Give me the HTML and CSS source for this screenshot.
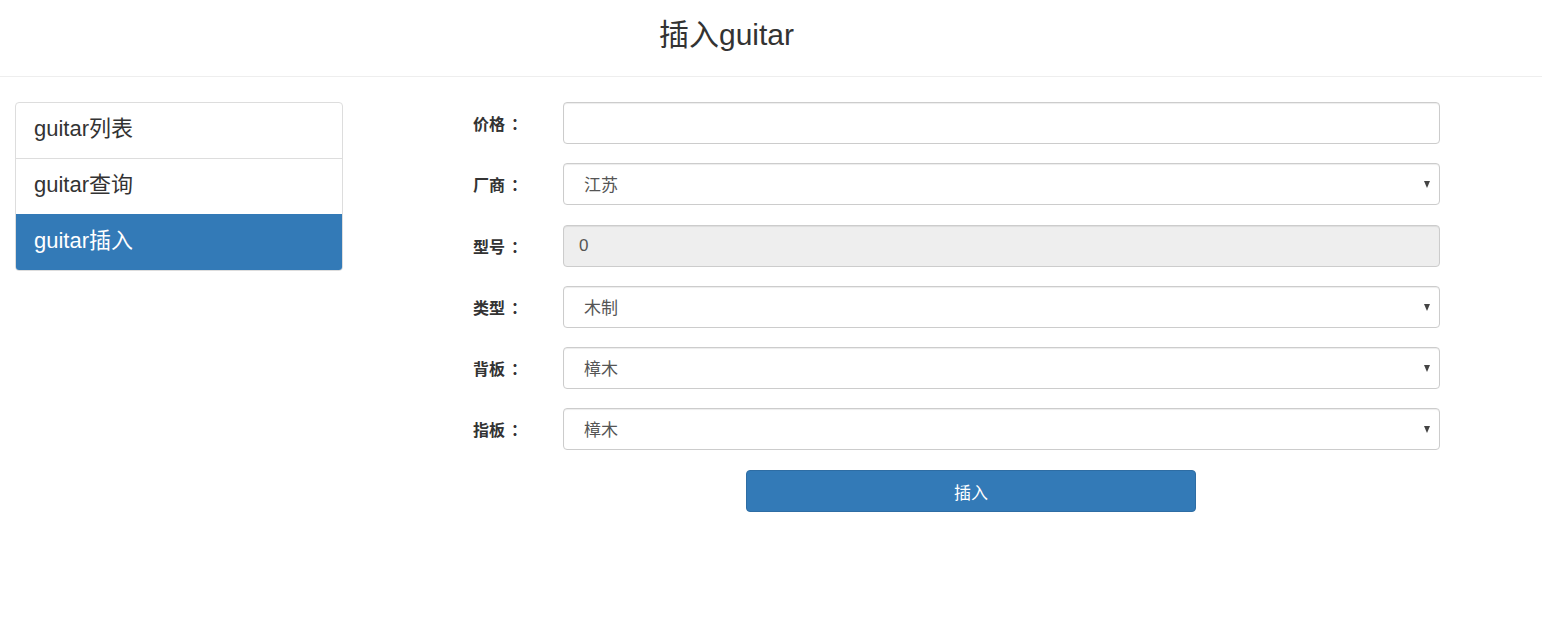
FILE: index.html
```html
<!DOCTYPE html>
<html lang="zh">
<head>
<meta charset="utf-8">
<title>插入guitar</title>
<link rel="stylesheet" href="styles.css">
</head>
<body>
<header class="top">
  <h1 class="title">插入guitar</h1>
</header>
<main class="main">
  <nav class="side">
    <a class="side-item" href="#">guitar列表</a>
    <a class="side-item" href="#">guitar查询</a>
    <a class="side-item active" href="#">guitar插入</a>
  </nav>
  <form class="form">
    <div class="row">
      <label class="lbl">价格<span class="colon">：</span></label>
      <input class="ctl" type="text">
    </div>
    <div class="row">
      <label class="lbl">厂商<span class="colon">：</span></label>
      <div class="sel-wrap">
        <select class="ctl sel"><option>江苏</option></select>
        <span class="caret"></span>
      </div>
    </div>
    <div class="row row-shift">
      <label class="lbl">型号<span class="colon">：</span></label>
      <input class="ctl ro" type="text" value="0" readonly>
    </div>
    <div class="row">
      <label class="lbl">类型<span class="colon">：</span></label>
      <div class="sel-wrap">
        <select class="ctl sel"><option>木制</option></select>
        <span class="caret"></span>
      </div>
    </div>
    <div class="row">
      <label class="lbl">背板<span class="colon">：</span></label>
      <div class="sel-wrap">
        <select class="ctl sel"><option>樟木</option></select>
        <span class="caret"></span>
      </div>
    </div>
    <div class="row">
      <label class="lbl">指板<span class="colon">：</span></label>
      <div class="sel-wrap">
        <select class="ctl sel"><option>樟木</option></select>
        <span class="caret"></span>
      </div>
    </div>
    <div class="btn-row">
      <button class="btn" type="button">插入</button>
    </div>
  </form>
</main>
</body>
</html>
```
FILE: styles.css
```css
* { box-sizing: border-box; }
html, body {
  margin: 0;
  padding: 0;
  background: #fff;
  font-family: "Liberation Sans", "Noto Sans CJK SC", sans-serif;
  color: #333;
}
.top {
  height: 77px;
  border-bottom: 1px solid #eee;
  display: flex;
  align-items: center;
  padding-left: 659px;
}
.title {
  margin: 0;
  font-size: 30px;
  font-weight: normal;
  line-height: 1;
  color: #333;
  padding-bottom: 6px;
}
.main {
  display: flex;
  align-items: flex-start;
  padding: 25px 15px;
}
.side {
  width: 328px;
  display: flex;
  flex-direction: column;
  border: 1px solid #ddd;
  border-radius: 4px;
  overflow: hidden;
}
.side-item {
  height: 56px;
  display: flex;
  align-items: center;
  padding-left: 18px;
  font-size: 22px;
  color: #333;
  text-decoration: none;
  border-top: 1px solid #ddd;
  padding-bottom: 9px;
}
.side-item:first-child { border-top: none; height: 55px; }
.side-item.active {
  background: #337ab7;
  color: #fff;
  border-top-color: #337ab7;
}
.form {
  margin-left: 130px;
  width: 967px;
  display: flex;
  flex-direction: column;
  gap: 19px;
}
.row {
  display: flex;
  align-items: center;
  height: 42px;
}
.row-shift { margin-top: 1px; }
.lbl {
  width: 90px;
  font-size: 16px;
  font-weight: bold;
  color: #333;
}
.colon { margin-left: 6px; }
.ctl {
  width: 877px;
  height: 42px;
  border: 1px solid #ccc;
  border-radius: 4px;
  background: #fff;
  font-family: "Liberation Sans", "Noto Sans CJK SC", sans-serif;
  font-size: 17px;
  color: #555;
  padding: 0 15px;
  box-shadow: inset 0 1px 1px rgba(0,0,0,.075);
  outline: none;
}
.ro { background: #eee; }
.sel-wrap {
  position: relative;
  width: 877px;
  height: 42px;
}
.sel {
  -webkit-appearance: none;
  appearance: none;
  padding-left: 20px;
  padding-top: 3px;
}
.caret {
  position: absolute;
  right: 10px;
  top: 18px;
  width: 0;
  height: 0;
  border-left: 3.5px solid transparent;
  border-right: 3.5px solid transparent;
  border-top: 7px solid #444;
  pointer-events: none;
}
.btn-row {
  display: flex;
  padding-left: 273px;
  margin-top: 1px;
}
.btn {
  width: 450px;
  height: 42px;
  background: #337ab7;
  border: 1px solid #2e6da4;
  border-radius: 4px;
  color: #fff;
  font-family: "Liberation Sans", "Noto Sans CJK SC", sans-serif;
  font-size: 17px;
}
```
